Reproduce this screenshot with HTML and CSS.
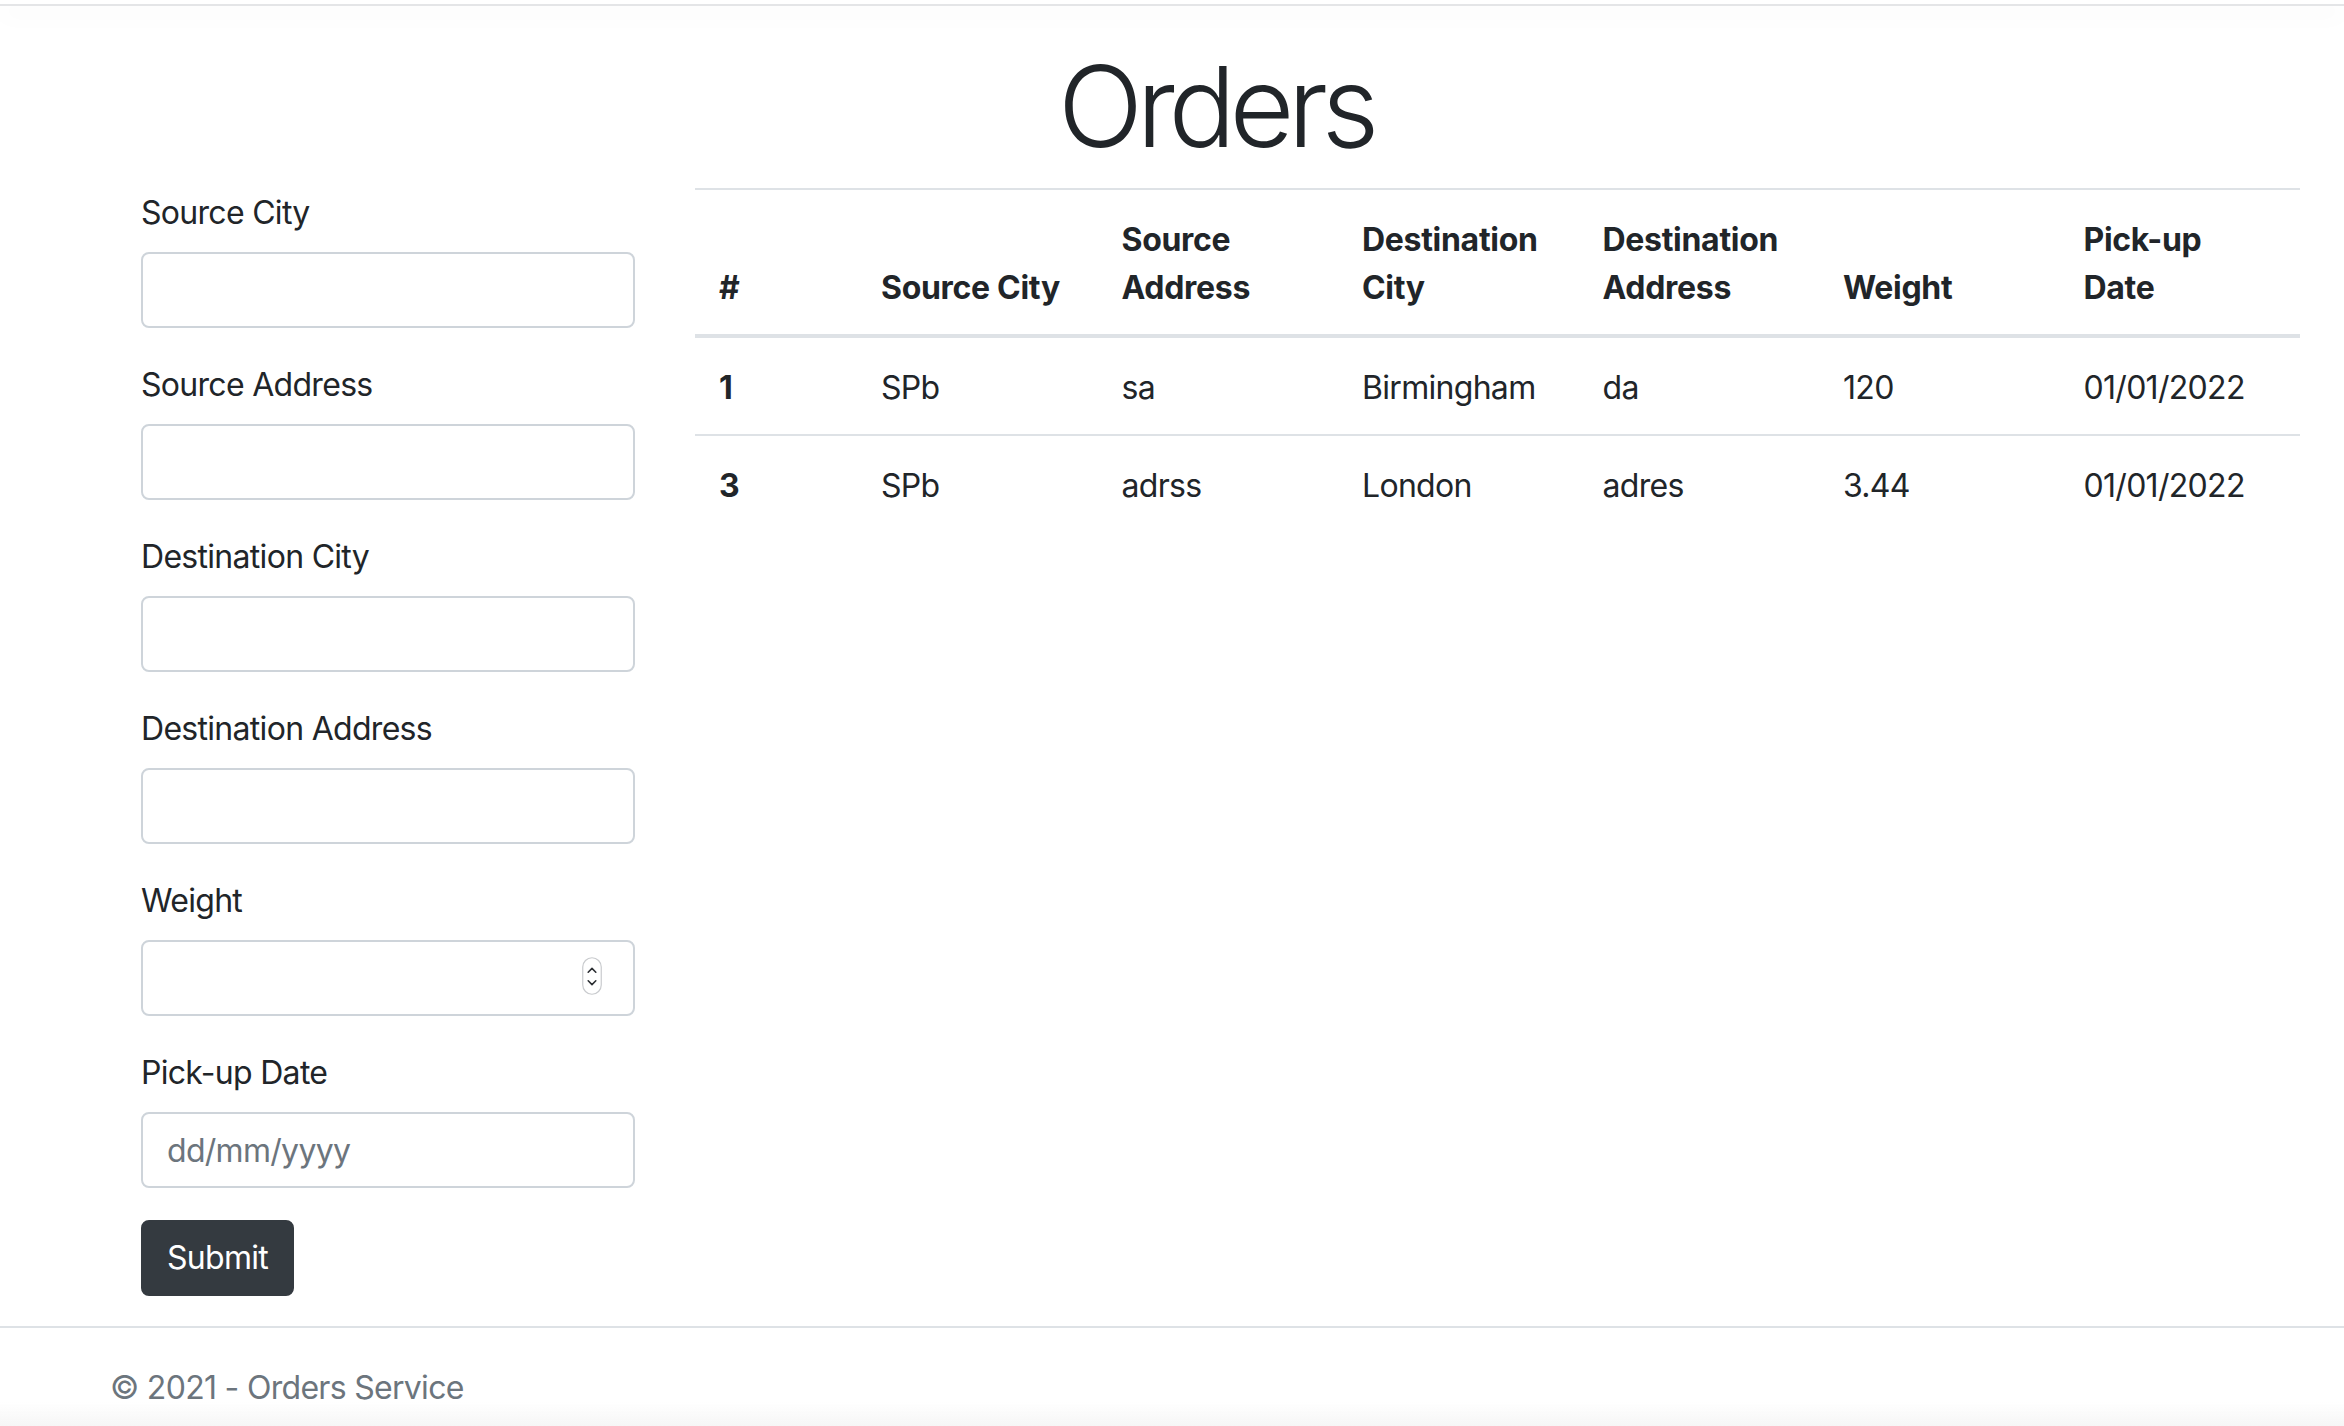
FILE: index.html
```html
<!DOCTYPE html>
<html lang="en">
<head>
<meta charset="utf-8">
<title>Orders</title>
<link rel="stylesheet" href="styles.css">
</head>
<body>
<header class="topbar"></header>
<div class="container">
  <h1 class="title">Orders</h1>
</div>
<main class="layout">
  <form class="order-form">
    <div class="form-group">
      <label class="form-label">Source City</label>
      <input class="form-control" type="text">
    </div>
    <div class="form-group">
      <label class="form-label">Source Address</label>
      <input class="form-control" type="text">
    </div>
    <div class="form-group">
      <label class="form-label">Destination City</label>
      <input class="form-control" type="text">
    </div>
    <div class="form-group">
      <label class="form-label">Destination Address</label>
      <input class="form-control" type="text">
    </div>
    <div class="form-group">
      <label class="form-label">Weight</label>
      <div class="number-wrap">
        <input class="form-control" type="text">
        <svg class="spinner" width="20" height="38" viewBox="0 0 20 38" aria-hidden="true">
          <rect x="0.75" y="0.75" width="18.5" height="36.5" rx="9.25" fill="#fff" stroke="#c9cbce" stroke-width="1.2"/>
          <path d="M6.2 15.2 L10 11.4 L13.8 15.2" fill="none" stroke="#2c2f33" stroke-width="1.6" stroke-linecap="round" stroke-linejoin="round"/>
          <path d="M6.2 23.8 L10 27.6 L13.8 23.8" fill="none" stroke="#2c2f33" stroke-width="1.6" stroke-linecap="round" stroke-linejoin="round"/>
        </svg>
      </div>
    </div>
    <div class="form-group">
      <label class="form-label">Pick-up Date</label>
      <input class="form-control" type="text" placeholder="dd/mm/yyyy">
    </div>
    <button class="btn-dark" type="button">Submit</button>
  </form>

  <table class="orders">
    <thead>
      <tr>
        <th class="col-num">#</th>
        <th>Source City</th>
        <th>Source Address</th>
        <th>Destination City</th>
        <th>Destination Address</th>
        <th>Weight</th>
        <th>Pick-up Date</th>
      </tr>
    </thead>
    <tbody>
      <tr>
        <th class="row-head">1</th>
        <td>SPb</td>
        <td>sa</td>
        <td>Birmingham</td>
        <td>da</td>
        <td>120</td>
        <td>01/01/2022</td>
      </tr>
      <tr>
        <th class="row-head">3</th>
        <td>SPb</td>
        <td>adrss</td>
        <td>London</td>
        <td>adres</td>
        <td>3.44</td>
        <td>01/01/2022</td>
      </tr>
    </tbody>
  </table>
</main>
<footer class="footer">
  <div class="container">© 2021 - Orders Service</div>
</footer>
<div class="bottom-fade"></div>
</body>
</html>
```

FILE: styles.css
```css
*, *::before, *::after {
  box-sizing: border-box;
}

html, body {
  margin: 0;
  padding: 0;
  overflow: hidden;
}

body {
  font-family: Inter, "Liberation Sans", "DejaVu Sans", sans-serif;
  font-size: 32px;
  line-height: 1.5;
  letter-spacing: -0.7px;
  color: #212529;
  background: #fff;
}

.topbar {
  height: 6px;
  border-bottom: 2px solid #e4e5e7;
  box-shadow: 0 8px 24px rgba(0, 0, 0, 0.05);
}

.container {
  margin-left: 80px;
  width: 2280px;
  padding: 0 30px;
}

.title {
  margin: 33px 0 15px;
  padding-right: 9px;
  font-size: 112px;
  font-weight: 300;
  line-height: 1.2;
  text-align: center;
  letter-spacing: -6.5px;
}

.layout {
  display: flex;
  align-items: flex-start;
  gap: 60px;
  padding: 0 0 30px 141px;
}

.order-form {
  width: 494px;
  flex: none;
}

.form-group {
  margin-bottom: 32px;
}

.form-label {
  display: block;
  margin-bottom: 16px;
  padding-top: 1px;
  height: 48px;
  font-size: 32px;
  line-height: 48px;
}

.form-control {
  display: block;
  width: 100%;
  height: 76px;
  padding: 12px 24px;
  font-family: inherit;
  font-size: 32px;
  line-height: 48px;
  letter-spacing: -0.7px;
  color: #495057;
  background: #fff;
  border: 2px solid #ced4da;
  border-radius: 8px;
  outline: none;
}

.form-control::placeholder {
  color: #6c757d;
  opacity: 1;
}

.number-wrap {
  position: relative;
}

.spinner {
  position: absolute;
  right: 33px;
  top: 17px;
}

.btn-dark {
  display: inline-block;
  height: 76px;
  padding: 12px 24px;
  font-family: inherit;
  font-size: 32px;
  line-height: 48px;
  letter-spacing: -0.7px;
  color: #fff;
  background: #343a40;
  border: 2px solid #343a40;
  border-radius: 8px;
}

.orders {
  width: 1605px;
  flex: none;
  border-collapse: collapse;
  table-layout: fixed;
  border-top: 2px solid #dee2e6;
}

.orders th,
.orders td {
  padding: 26px 24px 22px;
  text-align: left;
  line-height: 48px;
}

.orders thead th {
  vertical-align: bottom;
  font-weight: 700;
  letter-spacing: -0.3px;
  border-bottom: 4px solid #dee2e6;
}

.orders .col-num {
  width: 162px;
}

.orders tbody tr + tr th,
.orders tbody tr + tr td {
  border-top: 2px solid #dee2e6;
}

.orders .row-head {
  font-weight: 700;
}

.footer {
  border-top: 2px solid #dee2e6;
  line-height: 120px;
  color: #6c757d;
  white-space: nowrap;
}

.bottom-fade {
  position: fixed;
  left: 0;
  right: 0;
  bottom: 0;
  height: 24px;
  background: linear-gradient(to bottom, rgba(245, 245, 245, 0), rgba(245, 245, 245, 0.9));
  pointer-events: none;
}
```
